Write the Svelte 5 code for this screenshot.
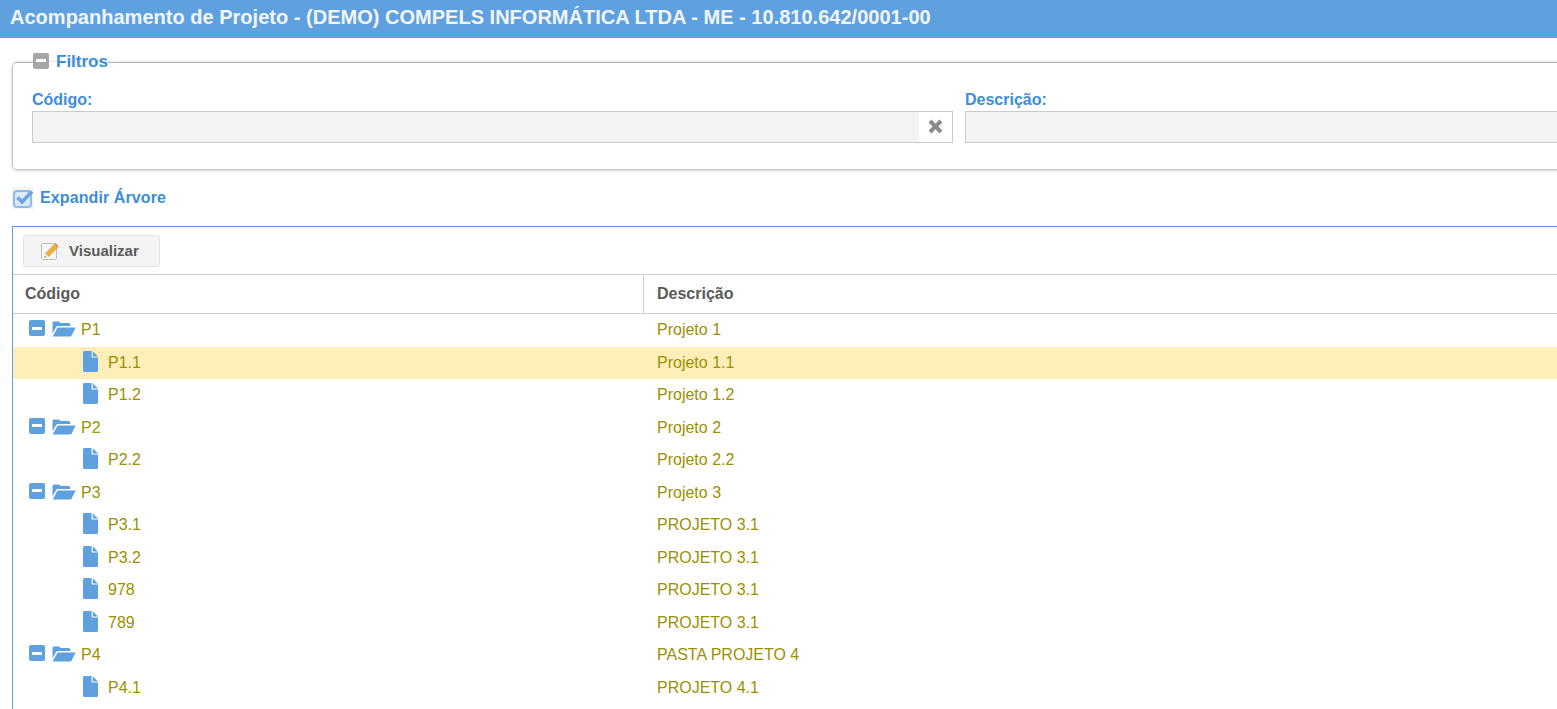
<script>
  // level 0 = folder, level 1 = file
  const rows = [
    { cod: 'P1', desc: 'Projeto 1', folder: true },
    { cod: 'P1.1', desc: 'Projeto 1.1', selected: true },
    { cod: 'P1.2', desc: 'Projeto 1.2' },
    { cod: 'P2', desc: 'Projeto 2', folder: true },
    { cod: 'P2.2', desc: 'Projeto 2.2' },
    { cod: 'P3', desc: 'Projeto 3', folder: true },
    { cod: 'P3.1', desc: 'PROJETO 3.1' },
    { cod: 'P3.2', desc: 'PROJETO 3.1' },
    { cod: '978', desc: 'PROJETO 3.1' },
    { cod: '789', desc: 'PROJETO 3.1' },
    { cod: 'P4', desc: 'PASTA PROJETO 4', folder: true },
    { cod: 'P4.1', desc: 'PROJETO 4.1' }
  ];
</script>

<div class="page">
  <header class="topbar">Acompanhamento de Projeto - (DEMO) COMPELS INFORMÁTICA LTDA - ME - 10.810.642/0001-00</header>

  <div class="content">
    <fieldset class="filtros">
      <legend>
        <span class="toggle gray"><span></span></span>
        <span>Filtros</span>
      </legend>
      <div class="campos">
        <div class="campo">
          <label for="codigo">Código:</label>
          <div class="input-wrap">
            <input id="codigo" type="text" />
            <button class="clear" aria-label="Limpar">
              <svg viewBox="0 0 16 16" width="19" height="19">
                <path d="M2.2 4.6 4.6 2.2 8 5.6l3.4-3.4 2.4 2.4L10.4 8l3.4 3.4-2.4 2.4L8 10.4l-3.4 3.4-2.4-2.4L5.6 8z" fill="#8a8a8a" />
              </svg>
            </button>
          </div>
        </div>
        <div class="campo">
          <label for="descricao">Descrição:</label>
          <div class="input-wrap">
            <input id="descricao" type="text" />
          </div>
        </div>
      </div>
    </fieldset>

    <div class="expandir">
      <span class="check">
        <svg viewBox="0 0 22 22" width="22" height="22">
          <rect x="2" y="4" width="17" height="16" rx="3" fill="#dce9f7" stroke="#90bbe9" stroke-width="2" />
          <path d="M5.5 10.5 10 15 20 4.5" fill="none" stroke="#6aa5e2" stroke-width="3.6" />
        </svg>
      </span>
      <span>Expandir Árvore</span>
    </div>

    <section class="painel">
      <div class="toolbar">
        <button class="btn">
          <svg viewBox="0 0 18 18" width="18" height="18">
            <rect x="0.5" y="1.5" width="15" height="16" rx="1" fill="#f7f7f5" stroke="#bdbdbd" />
            <path d="M4.5 11.5 13.5 2.2 16.8 5.2 7.6 14.6z" fill="#f0b03f" stroke="#d58f2a" stroke-width="0.6" />
            <path d="M13.5 2.2 14.6 1.1 17.7 4.2 16.8 5.2z" fill="#e88f6d" />
            <path d="M4.5 11.5 3.4 15.6 7.6 14.6z" fill="#f3dfbe" />
            <path d="M3.4 15.6 3.8 14 5 15.2z" fill="#555" />
          </svg>
          <span class="btn-text">Visualizar</span>
        </button>
      </div>

      <div class="cabecalho">
        <div class="col-cod">Código</div>
        <div class="col-desc">Descrição</div>
      </div>

      {#each rows as row}
        <div class="linha" class:selected={row.selected}>
          <div class="cel-cod" class:filho={!row.folder}>
            {#if row.folder}
              <span class="toggle blue"><span></span></span>
              <svg class="pasta" viewBox="0 0 24 16" width="24" height="16">
                <path d="M0.5 12.5V2.2C0.5 1.2 1.2 0.5 2.2 0.5H6.5C7.4 0.5 8 1.1 8.4 2H16.5C17.5 2 18.2 2.7 18.2 3.7V5H6.2C5 5 4.3 5.5 3.8 6.5z" fill="#5fa0df" />
                <path d="M5.6 6.4H23.6L19.8 14.2C19.4 15 18.8 15.4 17.9 15.4H0.7z" fill="#5fa0df" />
              </svg>
            {:else}
              <svg class="doc" viewBox="0 0 15 21" width="15" height="21">
                <path d="M0 1.5C0 0.6 0.6 0 1.5 0H8.6V6.6H15V19.5C15 20.4 14.4 21 13.5 21H1.5C0.6 21 0 20.4 0 19.5z" fill="#5fa0df" />
                <path d="M9.8 0.2 15 5.4H9.8z" fill="#5fa0df" />
              </svg>
            {/if}
            <span>{row.cod}</span>
          </div>
          <div class="cel-desc">{row.desc}</div>
        </div>
      {/each}
    </section>
  </div>
</div>

<style>
  :global(body) {
    margin: 0;
    background: #fff;
    overflow: hidden;
  }

  .page {
    width: 1900px;
    height: 709px;
    overflow: hidden;
    font-family: "Liberation Sans", Arial, sans-serif;
  }

  .topbar {
    height: 38px;
    box-sizing: border-box;
    padding: 6px 0 0 10px;
    background: #5fa0df;
    color: #f2f6fb;
    font-size: 20px;
    line-height: 23px;
    font-weight: bold;
    letter-spacing: 0.015px;
  }

  .content {
    padding: 0 0 0 12px;
  }

  .filtros {
    box-sizing: border-box;
    margin: 14px 0 0;
    padding: 0 19px;
    width: 1890px;
    height: 118px;
    border: 1px solid #c8c8c8;
    border-top-color: #b5b5b5;
    border-radius: 5px;
    box-shadow: 0 1px 3px rgba(0, 0, 0, 0.18), 0 -1px 2px rgba(0, 0, 0, 0.08);
  }

  legend {
    display: flex;
    align-items: center;
    gap: 7px;
    margin-left: 1px;
    padding: 0;
    height: 20px;
    color: #3c8ddb;
    font-size: 17px;
    font-weight: bold;
  }

  .toggle {
    display: inline-flex;
    align-items: center;
    justify-content: center;
    width: 16px;
    height: 16px;
    border-radius: 2px;
    flex: none;
  }

  .toggle span {
    display: block;
    width: 10px;
    height: 3px;
    background: #fff;
  }

  .toggle.gray {
    background: #a6a6a6;
    margin-top: -3px;
  }

  .toggle.blue {
    background: #5fa0df;
    margin-top: 6px;
  }

  .campos {
    display: grid;
    grid-template-columns: 921px 1fr;
    column-gap: 12px;
    margin-top: 18px;
  }

  .campo label {
    display: block;
    color: #3c8ddb;
    font-size: 16px;
    line-height: 20px;
    font-weight: bold;
    margin-bottom: 1px;
  }

  .input-wrap {
    display: flex;
    height: 32px;
    box-sizing: border-box;
    border: 1px solid #cbcbcb;
  }

  .input-wrap input {
    flex: 1;
    min-width: 0;
    border: 0;
    padding: 0;
    background: #f4f4f4;
  }

  .clear {
    width: 33px;
    border: 0;
    padding: 0 0 2px;
    background: #fff;
    display: flex;
    align-items: center;
    justify-content: center;
  }

  .expandir {
    display: flex;
    align-items: center;
    gap: 6px;
    height: 22px;
    margin-top: 17px;
    color: #3c8ddb;
    font-size: 16px;
    font-weight: bold;
    letter-spacing: 0.1px;
  }

  .check {
    display: flex;
    width: 22px;
    height: 22px;
    background: #f4f4f4;
  }

  .painel {
    margin-top: 17px;
    width: 1890px;
    min-height: 520px;
    box-sizing: border-box;
    border: 1px solid #5fa0df;
  }

  .toolbar {
    height: 48px;
    box-sizing: border-box;
    padding: 8px 10px 0;
    border-bottom: 1px solid #cfcfcf;
  }

  .btn {
    display: flex;
    align-items: center;
    gap: 10px;
    width: 137px;
    height: 32px;
    box-sizing: border-box;
    padding: 0 0 0 17px;
    background: #f4f4f4;
    border: 1px solid #e2e2e2;
    border-radius: 3px;
    color: #5a5a5a;
    font-family: inherit;
    font-size: 15px;
    font-weight: bold;
  }

  .btn-text {
    margin-top: -2px;
  }

  .cabecalho {
    display: flex;
    height: 39px;
    box-sizing: border-box;
    border-bottom: 1px solid #cfcfcf;
    color: #5a5a5a;
    font-size: 16px;
    font-weight: bold;
    line-height: 38px;
  }

  .col-cod {
    width: 631px;
    box-sizing: border-box;
    padding-left: 12px;
    border-right: 1px solid #cfcfcf;
  }

  .col-desc {
    padding-left: 13px;
  }

  .linha {
    display: flex;
    height: 32.5px;
    line-height: 31px;
    color: #9c9000;
    font-size: 16px;
  }

  .linha.selected {
    background: #fdeeba;
  }

  .cel-cod {
    display: flex;
    align-items: flex-start;
    width: 630px;
    box-sizing: border-box;
    padding-left: 16px;
  }

  .cel-cod.filho {
    padding-left: 70px;
  }

  .pasta {
    margin: 7px 5px 0 7px;
  }

  .doc {
    margin: 4px 10px 0 0;
  }

  .cel-desc {
    padding-left: 14px;
  }
</style>
